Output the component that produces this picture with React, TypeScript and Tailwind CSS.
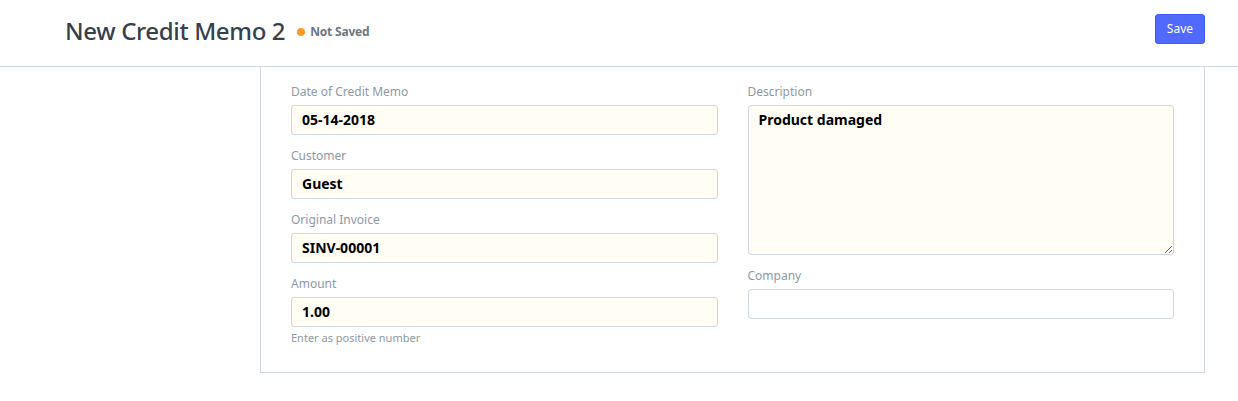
import React from "react";

const font = { fontFamily: '"Noto Sans", "Open Sans", sans-serif' };

function Field({ label, value, help, last }: { label: string; value: string; help?: string; last?: boolean }) {
  return (
    <div className={last ? "" : "mb-[11px]"}>
      <div className="h-[18px] text-[12px] leading-[20px] text-[#8d99a6]">{label}</div>
      <div className="mt-[5px] flex h-[30px] items-center rounded-[3px] border border-[#d1d8dd] bg-[#fffdf4] px-[10px] pb-[1px] text-[14px] font-bold text-black">
        {value}
      </div>
      {help && <div className="mt-[4px] text-[11px] leading-[14px] text-[#8d99a6]">{help}</div>}
    </div>
  );
}

export default function App() {
  return (
    <div className="h-[401px] w-[1238px] bg-white" style={font}>
      <header className="flex h-[67px] items-center justify-between border-b border-[#d1d8dd] pb-[4px] pl-[65px] pr-[33px]">
        <div className="flex items-center">
          <h1 className="text-[24px] font-medium leading-none tracking-[-0.35px] text-[#36414c]">New Credit Memo 2</h1>
          <span className="ml-[12px] mt-[2px] h-[8px] w-[8px] rounded-full bg-[#ff9a2a]" />
          <span className="ml-[5px] mt-[2px] text-[12px] font-bold tracking-[-0.2px] text-[#6c7680]">Not Saved</span>
        </div>
        <button className="-mt-[4px] h-[30px] rounded-[3px] border border-[#3f5bf5] bg-[#5069ff] px-[11px] text-[12px] text-white">
          Save
        </button>
      </header>
      <div className="ml-[260px] mr-[33px] h-[306px] border-x border-b border-[#d1d8dd] px-[30px] pt-[15px]">
        <div className="grid grid-cols-2 gap-[30px]">
          <div>
            <Field label="Date of Credit Memo" value="05-14-2018" />
            <Field label="Customer" value="Guest" />
            <Field label="Original Invoice" value="SINV-00001" />
            <Field label="Amount" value="1.00" help="Enter as positive number" last />
          </div>
          <div>
            <div className="mb-[11px]">
              <div className="h-[18px] text-[12px] leading-[20px] text-[#8d99a6]">Description</div>
              <textarea
                readOnly
                defaultValue="Product damaged"
                className="mt-[5px] block h-[150px] w-full resize-y rounded-[3px] border border-[#d1d8dd] bg-[#fffdf4] px-[10px] py-[4px] text-[14px] font-bold leading-[20px] text-black outline-none"
                style={font}
              />
            </div>
            <div>
              <div className="h-[18px] text-[12px] leading-[20px] text-[#8d99a6]">Company</div>
              <div className="mt-[5px] h-[30px] rounded-[3px] border border-[#d1d8dd] bg-white" />
            </div>
          </div>
        </div>
      </div>
    </div>
  );
}
